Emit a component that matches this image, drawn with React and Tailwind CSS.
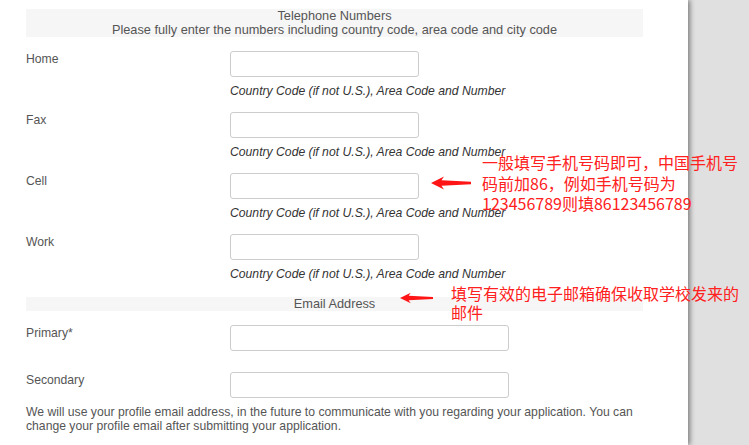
import React from 'react';

const phoneRows = ['Home', 'Fax', 'Cell', 'Work'];

function Arrow({ className }) {
    return (
        <svg className={className} viewBox="0 0 40 14" width="40" height="14">
            <path d="M0 7 L13 0.5 L10.5 4.3 L40 5.8 L40 8.2 L10.5 9.7 L13 13.5 Z" fill="#ff1515" />
        </svg>
    );
}

function PhoneRow({ label }) {
    return (
        <div className="grid grid-cols-[204px_1fr] pb-[14px]">
            <div className="pt-px leading-[14px]">{label}</div>
            <div>
                <input className="block w-[189px] h-[26px] border border-[#cccccc] rounded-[3px] bg-white" />
                <div className="mt-[7px] leading-[14px] italic text-[#333333]">
                    Country Code (if not U.S.), Area Code and Number
                </div>
            </div>
        </div>
    );
}

export default function App() {
    return (
        <div className="relative flex h-[445px] w-[749px] overflow-hidden bg-[#e0e0e0] text-[12.2px] text-[#555555] font-['Liberation_Sans',Arial,sans-serif]">
            {/* panel */}
            <div className="relative z-10 w-[688px] shrink-0 bg-white shadow-[2px_0_5px_rgba(0,0,0,0.45)] pl-[26px] pt-[9px]">
                <div className="w-[617px] bg-[#f6f6f6] text-center text-[12.75px] leading-[14px]">
                    <div>Telephone Numbers</div>
                    <div>Please fully enter the numbers including country code, area code and city code</div>
                </div>

                <div className="mt-[14px]">
                    {phoneRows.map(r => <PhoneRow key={r} label={r} />)}
                </div>

                <div className="mt-[2px] w-[617px] bg-[#f6f6f6] text-center text-[12.75px] leading-[14px]">Email Address</div>

                <div className="mt-[14px] grid grid-cols-[204px_1fr] pb-[21px]">
                    <div className="pt-px leading-[14px]">Primary*</div>
                    <input className="block w-[279px] h-[26px] border border-[#cccccc] rounded-[3px] bg-white" />
                </div>
                <div className="grid grid-cols-[204px_1fr]">
                    <div className="pt-px leading-[14px]">Secondary</div>
                    <input className="block w-[279px] h-[26px] border border-[#cccccc] rounded-[3px] bg-white" />
                </div>

                <p className="mt-[7px] w-[625px] leading-[14px]">
                    We will use your profile email address, in the future to communicate with you regarding your application. You can change your profile email after submitting your application.
                </p>
            </div>

            {/* annotations */}
            <Arrow className="absolute left-[431px] top-[176px] z-20" />
            <div className="absolute left-[482px] top-[152px] z-20 w-[262px] text-[16px] leading-[20.5px] text-[#ff2020] font-['Noto_Sans_CJK_SC',sans-serif]">
                一般填写手机号码即可，中国手机号码前加86，例如手机号码为123456789则填86123456789
            </div>
            <Arrow className="absolute left-[400px] top-[291px] z-20 w-[33px]" />
            <div className="absolute left-[451px] top-[284px] z-20 w-[292px] text-[16px] leading-[19px] text-[#ff2020] font-['Noto_Sans_CJK_SC',sans-serif]">
                填写有效的电子邮箱确保收取学校发来的邮件
            </div>
        </div>
    );
}
